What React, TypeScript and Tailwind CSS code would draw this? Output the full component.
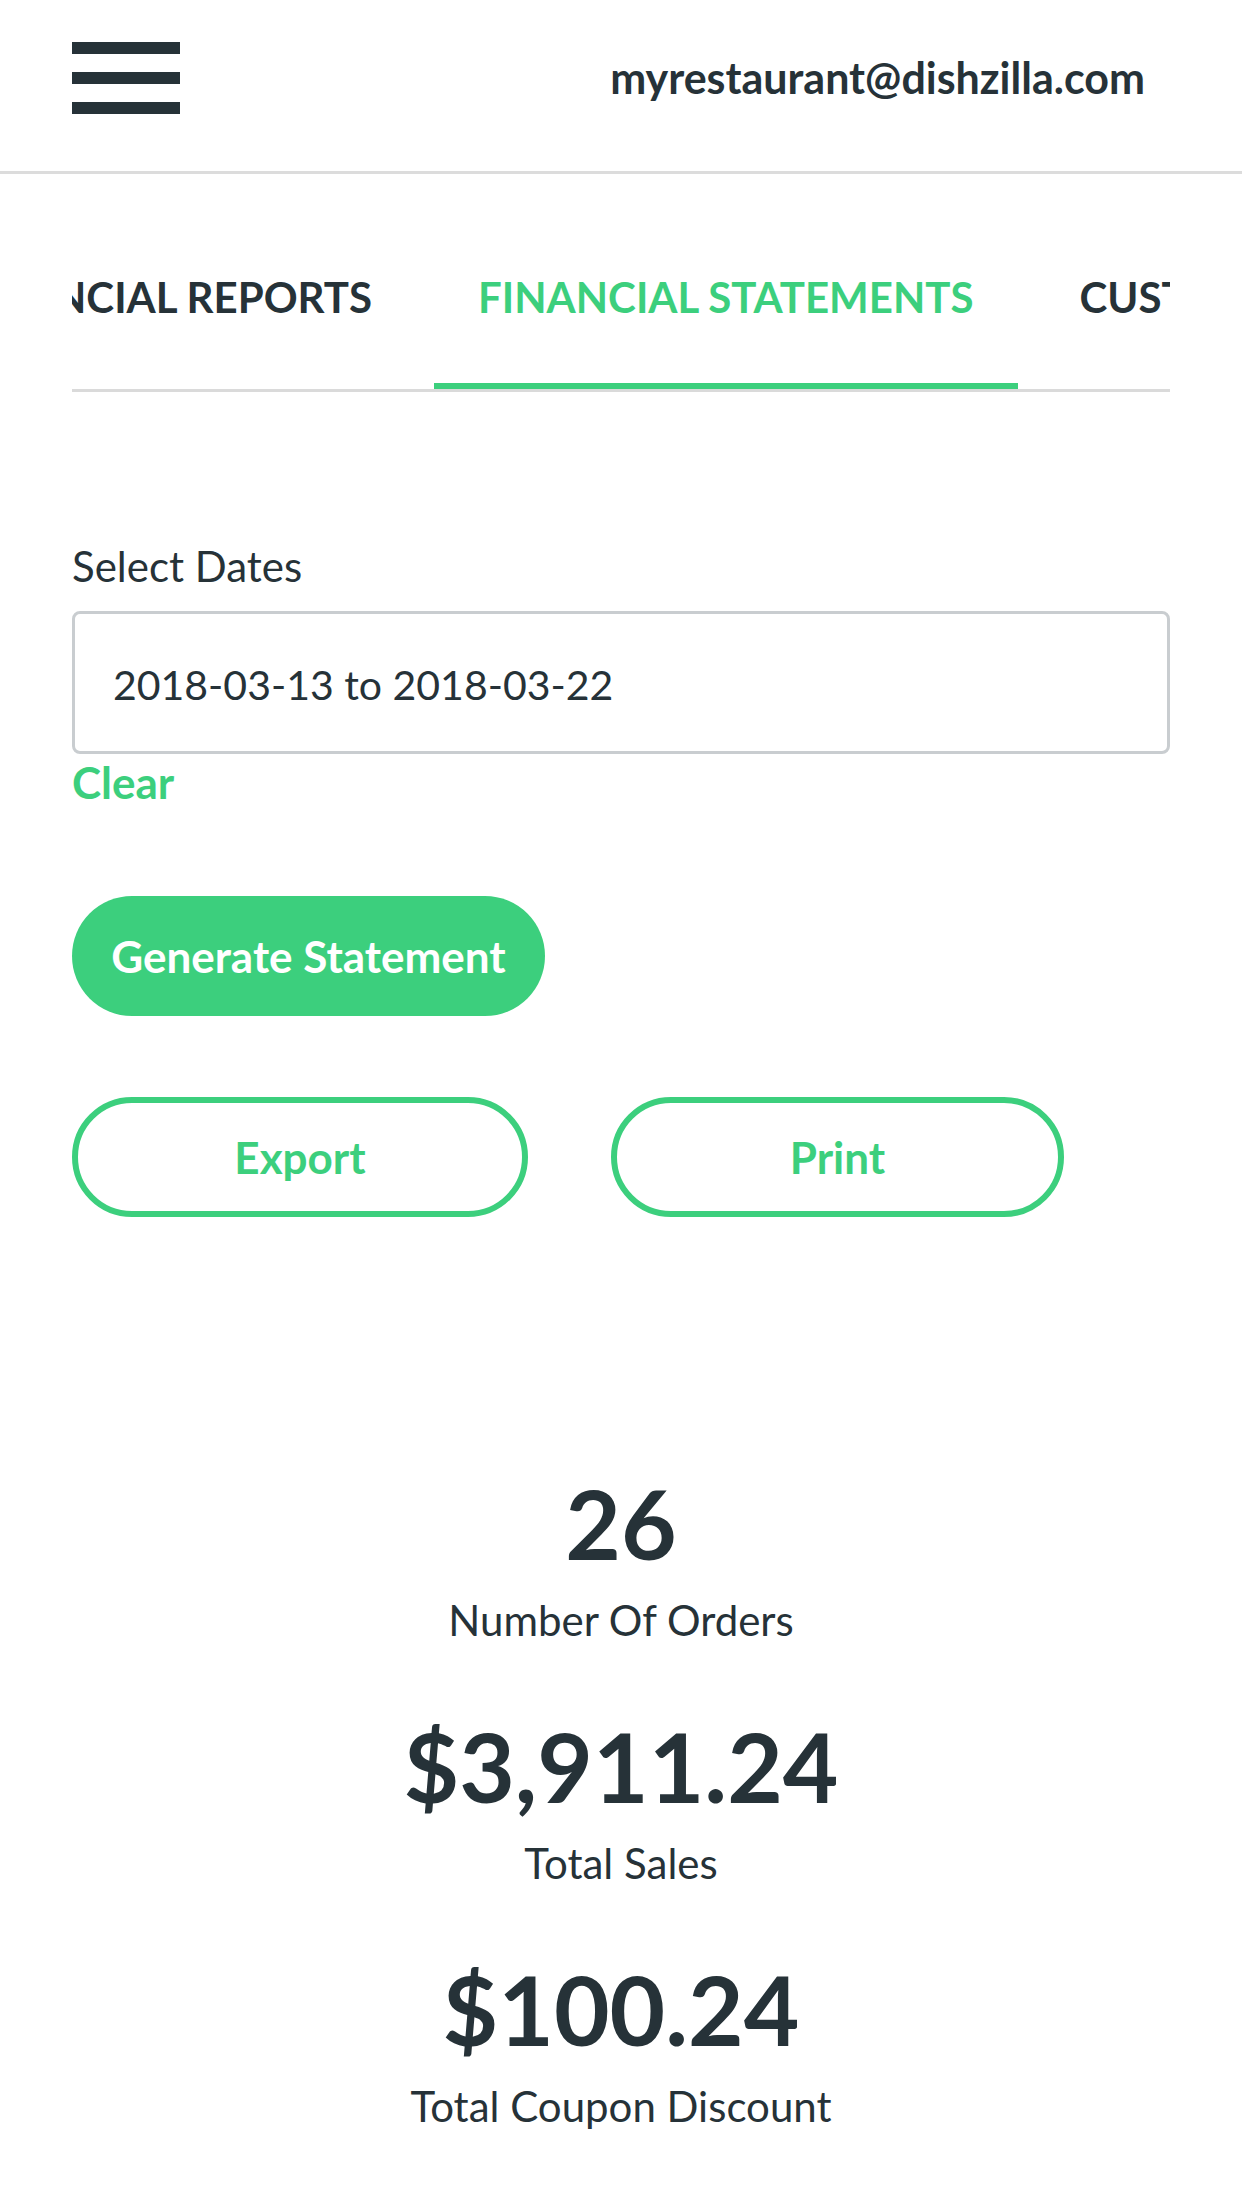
import React from 'react';

const stats = [
  { value: '26', label: 'Number Of Orders' },
  { value: '$3,911.24', label: 'Total Sales' },
  { value: '$100.24', label: 'Total Coupon Discount' },
];

const App: React.FC = () => {
  return (
    <div className="min-h-screen bg-white font-['Lato',sans-serif] text-[#263238]">
      {/* header */}
      <header className="h-[174px] border-b-[3px] border-[#dcdcdc] pt-[42px] pl-[72px] pr-[97px]">
        <div className="flex h-[72px] items-center justify-between">
          <button className="flex w-[108px] flex-col gap-[18px]">
            <span className="block h-[12px] w-full bg-[#263238]"></span>
            <span className="block h-[12px] w-full bg-[#263238]"></span>
            <span className="block h-[12px] w-full bg-[#263238]"></span>
          </button>
          <span className="text-[43px] font-bold leading-[50px]">myrestaurant@dishzilla.com</span>
        </div>
      </header>

      <main className="px-[72px]">
        <div className="mt-[98px] flex overflow-hidden border-b-[3px] border-[#dadada]">
          <div className="flex w-[344px] shrink-0 justify-end border-b-[6px] border-transparent pb-[61px]">
            <span className="whitespace-nowrap pr-[44px] text-[42px] font-bold leading-[50px]">FINANCIAL REPORTS</span>
          </div>
          <div className="ml-[18px] shrink-0 border-b-[6px] border-[#3ccf7d] px-[44px] pb-[61px]">
            <span className="whitespace-nowrap text-[42px] font-bold leading-[50px] text-[#3ccf7d]">FINANCIAL STATEMENTS</span>
          </div>
          <div className="ml-[18px] shrink-0 border-b-[6px] border-transparent px-[44px] pb-[61px]">
            <span className="whitespace-nowrap text-[42px] font-bold leading-[50px]">CUSTOMER REPORTS</span>
          </div>
        </div>

        {/* date picker */}
        <div className="mt-[149px]">
          <label className="block text-[42px] leading-[50px]">Select Dates</label>
          <div className="mt-[20px] flex h-[143px] items-center rounded-[8px] border-[3px] border-[#c9cdd0] pl-[38px] pt-[5px]">
            <span className="text-[41px] leading-[50px]">2018-03-13 to 2018-03-22</span>
          </div>
          <button className="mt-[3px] block text-[44px] font-bold leading-[50px] text-[#3ccf7d]">Clear</button>
        </div>

        <button className="mt-[89px] flex h-[120px] w-[473px] items-center justify-center rounded-full bg-[#3ccf7d] text-[44px] font-bold leading-[50px] text-white">
          Generate Statement
        </button>

        <div className="mt-[81px] flex gap-[83px]">
          <button className="flex h-[120px] w-[456px] items-center justify-center rounded-full border-[6px] border-[#3ccf7d] text-[44px] font-bold leading-[50px] text-[#3ccf7d]">
            Export
          </button>
          <button className="flex h-[120px] w-[453px] items-center justify-center rounded-full border-[6px] border-[#3ccf7d] text-[44px] font-bold leading-[50px] text-[#3ccf7d]">
            Print
          </button>
        </div>

        {/* totals */}
        <div className="mt-[253px] flex flex-col items-center gap-[68px] pb-[60px] text-center">
          {stats.map((s) => (
            <div key={s.label}>
              <div className="text-[96px] font-bold leading-[106px]">{s.value}</div>
              <div className="mt-[19px] text-[42px] leading-[50px]">{s.label}</div>
            </div>
          ))}
        </div>
      </main>
    </div>
  );
};

export default App;
